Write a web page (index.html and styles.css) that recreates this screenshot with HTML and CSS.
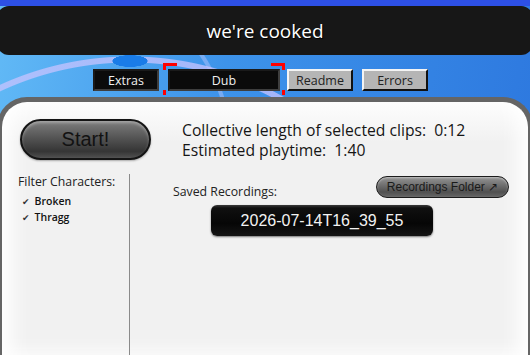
FILE: index.html
```html
<!DOCTYPE html>
<html lang="en">
<head>
    <meta charset="UTF-8">
    <meta name="viewport" content="width=device-width, initial-scale=1.0">
    <title>we're cooked</title>
    <link rel="stylesheet" href="styles.css">
</head>
<body>

    <div class="app">
        <header class="title">we're cooked</header>

        <!-- tab row -->
        <nav class="tabs">
            <button class="tab dark">Extras</button>
            <button class="tab dark selected">Dub<span class="brackets"></span></button>
            <button class="tab light">Readme</button>
            <button class="tab light">Errors</button>
        </nav>

        <!-- main panel -->
        <main class="panel">
            <div class="top">
                <button class="start">Start!</button>
                <div class="stats">
                    <p>Collective length of selected clips:&nbsp; 0:12</p>
                    <p>Estimated playtime:&nbsp; 1:40</p>
                </div>
            </div>

            <div class="lower">
                <aside class="filters">
                    <h3>Filter Characters:</h3>
                    <ul>
                        <li><span class="check">✔</span>Broken</li>
                        <li><span class="check">✔</span>Thragg</li>
                    </ul>
                </aside>

                <section class="recordings">
                    <div class="rec-head">
                        <span class="label">Saved Recordings:</span>
                        <button class="folder">Recordings Folder ↗</button>
                    </div>
                    <div class="recording">2026-07-14T16_39_55</div>
                </section>
            </div>
        </main>
    </div>

</body>
</html>
```

FILE: styles.css
```css
html, body {
    margin: 0;
    height: 100%;
}
body {
    font-family: "Open Sans", sans-serif;
    overflow: hidden;
    background:
        linear-gradient(#2d50e6 0 6px, transparent 6px),
        radial-gradient(ellipse 18px 6px at 130px 61px, #1a7ce8 95%, transparent 100%),
        radial-gradient(circle at 130px 369px, transparent 306px, rgba(200, 195, 255, 0.75) 307px, rgba(200, 195, 255, 0.75) 312px, transparent 313px),
        radial-gradient(circle at 60px 150px, transparent 168px, rgba(190, 200, 255, 0.45) 169px, rgba(190, 200, 255, 0.45) 172px, transparent 173px),
        linear-gradient(100deg, #62baf6 0%, #3d93ea 40%, #2c76de 100%);
}
.app {
    display: flex;
    flex-direction: column;
    height: 100%;
}
.title {
    margin: 6px -3px 0;
    height: 49px;
    border-radius: 12px;
    background: #171717;
    color: #fff;
    font-size: 19px;
    display: flex;
    align-items: center;
    justify-content: center;
    text-shadow: 1px 1px 1px #000;
}
.tabs {
    display: flex;
    margin-top: 14px;
    padding-left: 93px;
    height: 22px;
}
.tab {
    font-family: "Open Sans", sans-serif;
    font-size: 12.5px;
    width: 66px;
    height: 22px;
    padding: 0;
    box-sizing: border-box;
    border: 2px solid;
    position: relative;
    margin-right: 9px;
}
.tab.dark {
    background: #0b0b0b;
    color: #f0f0f0;
    border-color: #1a1a1a #3e3e3e #3e3e3e #1a1a1a;
}
.tab.light {
    background: #b5b5b5;
    color: #222;
    border-color: #f4f4f4 #111 #111 #f4f4f4;
}
.tab.selected {
    width: 112px;
    margin-right: 7px;
}
.brackets {
    position: absolute;
    left: -7px;
    top: -8px;
    right: -7px;
    bottom: -6px;
    background:
        linear-gradient(#f00, #f00) left top / 14px 3px,
        linear-gradient(#f00, #f00) left top / 3px 7px,
        linear-gradient(#f00, #f00) right top / 14px 3px,
        linear-gradient(#f00, #f00) right top / 3px 7px,
        linear-gradient(#f00, #f00) left bottom / 3px 5px,
        linear-gradient(#f00, #f00) right bottom / 3px 5px;
    background-repeat: no-repeat;
}
.panel {
    flex: 1;
    margin: 6px -3px 0;
    border: 5px solid #656565;
    border-bottom: none;
    border-radius: 30px 30px 0 0;
    background: linear-gradient(#fdfdfd, #f1f1f1 40px);
    box-shadow:
        inset 22px 0 20px -12px #fff,
        inset -22px 0 20px -12px #fff,
        inset 0 -14px 14px -8px #fafafa;
    display: flex;
    flex-direction: column;
}
.top {
    display: flex;
    padding: 17px 0 0 18px;
}
.start {
    width: 131px;
    height: 41px;
    border-radius: 21px;
    border: 2px solid #141414;
    background: linear-gradient(#7e7e7e 0%, #626262 30%, #4c4c4c 55%, #353535 82%, #505050 100%);
    box-shadow: inset 0 2px 3px rgba(255, 255, 255, 0.3), 0 1px 2px rgba(0, 0, 0, 0.3);
    font-family: "Liberation Sans", sans-serif;
    font-size: 20px;
    color: #121212;
    padding: 0;
}
.stats {
    margin: 1px 0 0 31px;
    font-size: 15.7px;
    color: #151515;
    line-height: 20px;
}
.stats p {
    margin: 0;
}
.lower {
    flex: 1;
    display: flex;
    margin-top: 14px;
}
.filters {
    width: 111px;
    padding-left: 16px;
    border-right: 1px solid #8a8a8a;
}
.filters h3 {
    margin: 0;
    font-size: 12.3px;
    font-weight: normal;
    line-height: 16px;
    color: #222;
}
.filters ul {
    list-style: none;
    margin: 4px 0 0;
    padding-left: 4px;
}
.filters li {
    font-size: 10.5px;
    font-weight: 600;
    line-height: 15px;
    color: #111;
}
.check {
    font-family: "DejaVu Sans", sans-serif;
    font-size: 9px;
    font-weight: normal;
    color: #333;
    margin-right: 5px;
}
.recordings {
    flex: 1;
    display: flex;
    flex-direction: column;
}
.rec-head {
    display: flex;
    justify-content: space-between;
    margin-top: 2px;
    height: 24px;
    padding: 0 19px 0 43px;
}
.label {
    align-self: flex-end;
    font-size: 12.3px;
    line-height: 16px;
    color: #222;
}
.folder {
    width: 133px;
    height: 22px;
    padding: 0;
    border-radius: 11px;
    border: 1px solid #1c1c1c;
    background: linear-gradient(#949494, #6c6c6c 45%, #505050 75%, #666);
    box-shadow: inset 0 1px 2px rgba(255, 255, 255, 0.4);
    font-family: "Liberation Sans", sans-serif;
    font-size: 12px;
    color: #1a1a1a;
}
.recording {
    margin: 5px 0 0 81px;
    width: 222px;
    height: 31px;
    box-sizing: border-box;
    border-radius: 6px;
    background: linear-gradient(#3a3a3a 0, #101010 3px, #060606 60%, #151515 100%);
    box-shadow: 0 1px 2px rgba(0, 0, 0, 0.5);
    color: #f2f2f2;
    font-family: "Liberation Sans", sans-serif;
    font-size: 16px;
    display: flex;
    align-items: center;
    justify-content: center;
}
```
